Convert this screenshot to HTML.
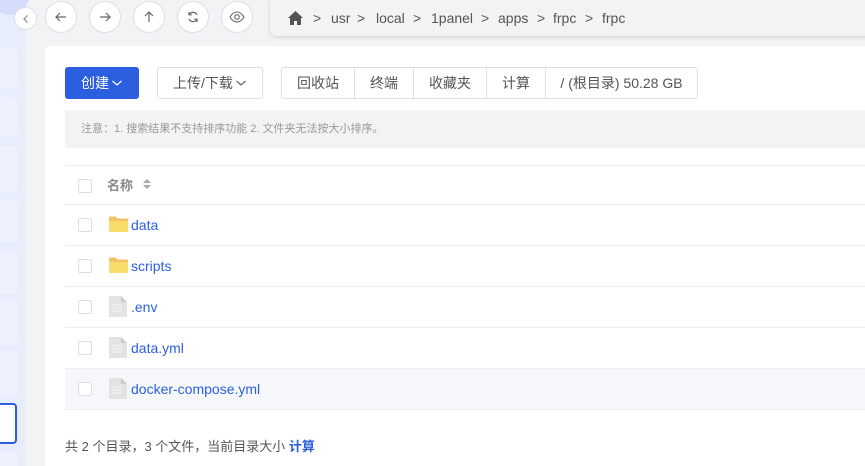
<!DOCTYPE html>
<html style="width:865px;height:466px;overflow:hidden"><head><meta charset="utf-8"><style>
*{margin:0;padding:0;box-sizing:border-box}
body{width:865px;height:466px;overflow:hidden;background:#f2f3f5;font-family:"Liberation Sans","Noto Sans CJK SC",sans-serif;position:relative;font-size:14px;color:#333}
.side{position:absolute;left:0;top:0;width:25px;height:466px;background:#e8edfc}
.side .c{position:absolute;left:-6px;width:23px;background:#eff2fe;border-radius:4px}
.side .sel{background:#fff;border:2px solid #2c5fe0}
.blob{position:absolute;left:-10px;top:-30px;width:40px;height:45px;border-radius:50%;background:#d3ddf9}
.cb{position:absolute;width:32px;height:32px;border-radius:50%;background:#fff;border:1px solid #dcdfe6;top:1px;display:flex;align-items:center;justify-content:center}
.crumb{position:absolute;left:270px;top:0;width:600px;height:36px;background:#f2f3f5;border-radius:0 0 0 6px;box-shadow:0 1px 4px rgba(0,0,0,.15);font-size:14px;color:#555}
.crumb span{position:absolute;top:10px}
.main{position:absolute;left:45px;top:46px;width:830px;height:420px;background:#fff;border-radius:4px 4px 0 0}
.btn{position:absolute;top:21px;height:32px;border:1px solid #dcdfe6;border-radius:3px;font-size:14px;display:flex;align-items:center;justify-content:center;color:#555}
.grp{position:absolute;left:236px;top:21px;height:32px;border:1px solid #dcdfe6;border-radius:3px;display:flex;font-size:14px;color:#555}
.grp div{display:flex;align-items:center;justify-content:center;border-right:1px solid #dcdfe6}
.grp div:last-child{border:none}
.note{position:absolute;left:20px;top:64px;width:820px;height:38px;background:#f2f3f5;font-size:11px;color:#999;padding:10px 0 0 16px}
.row{position:absolute;left:20px;width:820px;height:41px;border-bottom:1px solid #ebeef5}
.chk{position:absolute;left:13px;top:13px;width:14px;height:14px;border:1px solid #dcdfe6;border-radius:2px;background:#fff}
.nm{position:absolute;left:66px;top:12px;color:#2c5fe0;font-size:14px}
.ic{position:absolute;left:44px;top:11px}
</style></head><body>
<div class="side">
<div class="blob"></div>
<div class="c" style="top:48px;height:41px"></div>
<div class="c" style="top:97px;height:40px"></div>
<div class="c" style="top:146px;height:46px"></div>
<div class="c" style="top:199px;height:43px"></div>
<div class="c" style="top:251px;height:43px"></div>
<div class="c" style="top:301px;height:44px"></div>
<div class="c" style="top:350px;height:45px"></div>
<div class="c sel" style="top:403px;height:41px"></div>
<div class="c" style="top:452px;height:30px"></div>
</div>
<div class="cb" style="left:14px;top:7px;width:23px;height:23px"><svg width="10" height="10" viewBox="0 0 10 10"><path d="M6.5 1.5L3 5l3.5 3.5" stroke="#888" fill="none" stroke-width="1.2"/></svg></div>
<div class="cb" style="left:45px"><svg width="14" height="14" viewBox="0 0 14 14"><path d="M12 7H2M6 3L2 7l4 4" stroke="#666" fill="none" stroke-width="1.2"/></svg></div>
<div class="cb" style="left:89px"><svg width="14" height="14" viewBox="0 0 14 14"><path d="M2 7h10M8 3l4 4-4 4" stroke="#666" fill="none" stroke-width="1.2"/></svg></div>
<div class="cb" style="left:133px"><svg width="14" height="14" viewBox="0 0 14 14"><path d="M7 12V2M3 6l4-4 4 4" stroke="#666" fill="none" stroke-width="1.2"/></svg></div>
<div class="cb" style="left:177px"><svg width="14" height="14" viewBox="0 0 14 14"><path d="M11 5A4.3 4.3 0 0 0 3.3 4.5M3 9a4.3 4.3 0 0 0 7.7.5M3 2v2.8h2.8M11 12V9.2H8.2" stroke="#666" fill="none" stroke-width="1.2"/></svg></div>
<div class="cb" style="left:221px"><svg width="16" height="12" viewBox="0 0 16 12"><path d="M1 6C3 2.5 5.5 1 8 1s5 1.5 7 5c-2 3.5-4.5 5-7 5S3 9.5 1 6z" stroke="#666" fill="none" stroke-width="1.1"/><circle cx="8" cy="6" r="2.3" stroke="#666" fill="none" stroke-width="1.1"/></svg></div>
<div class="crumb">
<svg style="position:absolute;left:17px;top:10px" width="17" height="16" viewBox="0 0 17 16"><path d="M8.5 1L1 8h2v7h4v-4h3v4h4V8h2z" fill="#555"/></svg>
<span style="left:43px">&gt;</span><span style="left:61px">usr</span><span style="left:87px">&gt;</span><span style="left:106px">local</span><span style="left:143px">&gt;</span><span style="left:161px">1panel</span><span style="left:211px">&gt;</span><span style="left:228px">apps</span><span style="left:267px">&gt;</span><span style="left:283px">frpc</span><span style="left:315px">&gt;</span><span style="left:332px">frpc</span>
</div>
<div class="main">
<div class="btn" style="left:20px;width:74px;background:#2c5fe0;border-color:#2c5fe0;color:#fff">创建<svg width="12" height="8" viewBox="0 0 12 8" style="margin-left:2px"><path d="M1.5 2l4.5 4 4.5-4" stroke="#fff" fill="none" stroke-width="1.2"/></svg></div>
<div class="btn" style="left:112px;width:106px">上传/下载<svg width="12" height="8" viewBox="0 0 12 8" style="margin-left:2px"><path d="M1.5 2l4.5 4 4.5-4" stroke="#666" fill="none" stroke-width="1.2"/></svg></div>
<div class="grp"><div style="width:73px">回收站</div><div style="width:59px">终端</div><div style="width:73px">收藏夹</div><div style="width:59px">计算</div><div style="width:151px">/ (根目录) 50.28 GB</div></div>
<div class="note">注意：1. 搜索结果不支持排序功能 2. 文件夹无法按大小排序。</div>
<div class="row" style="top:119px;border-top:1px solid #ebeef5;height:40px"><div class="chk"></div><span style="position:absolute;left:42px;top:9px;color:#888;font-weight:bold;font-size:13px">名称</span><svg style="position:absolute;left:77px;top:12px" width="10" height="12" viewBox="0 0 10 12"><path d="M1 5l4-4 4 4zM1 7l4 4 4-4z" fill="#aaa"/></svg></div>
<div class="row" style="top:159px"><div class="chk"></div><svg class="ic" width="19" height="16" viewBox="0 0 19 16"><path d="M0 2a1.5 1.5 0 0 1 1.5-1.5h5l2 2h9A1.5 1.5 0 0 1 19 4v10.5A1.5 1.5 0 0 1 17.5 16h-16A1.5 1.5 0 0 1 0 14.5z" fill="#f9dc6b"/><path d="M0 2a1.5 1.5 0 0 1 1.5-1.5h5l2 2h9A1.5 1.5 0 0 1 19 4v1H0z" fill="#f4c265"/></svg><span class="nm">data</span></div>
<div class="row" style="top:200px"><div class="chk"></div><svg class="ic" width="19" height="16" viewBox="0 0 19 16"><path d="M0 2a1.5 1.5 0 0 1 1.5-1.5h5l2 2h9A1.5 1.5 0 0 1 19 4v10.5A1.5 1.5 0 0 1 17.5 16h-16A1.5 1.5 0 0 1 0 14.5z" fill="#f9dc6b"/><path d="M0 2a1.5 1.5 0 0 1 1.5-1.5h5l2 2h9A1.5 1.5 0 0 1 19 4v1H0z" fill="#f4c265"/></svg><span class="nm">scripts</span></div>
<div class="row" style="top:241px"><div class="chk"></div><svg class="ic" style="top:9px" width="18" height="21" viewBox="0 0 18 21"><path d="M0 0h12l6 6v15H0z" fill="#e3e3e3"/><path d="M12 0v6h6z" fill="#ccc"/><path d="M3 9h10M3 12h10M3 15h10" stroke="#f5f5f5"/></svg><span class="nm">.env</span></div>
<div class="row" style="top:282px"><div class="chk"></div><svg class="ic" style="top:9px" width="18" height="21" viewBox="0 0 18 21"><path d="M0 0h12l6 6v15H0z" fill="#e3e3e3"/><path d="M12 0v6h6z" fill="#ccc"/><path d="M3 9h10M3 12h10M3 15h10" stroke="#f5f5f5"/></svg><span class="nm">data.yml</span></div>
<div class="row" style="top:323px;background:#f5f7fa"><div class="chk"></div><svg class="ic" style="top:9px" width="18" height="21" viewBox="0 0 18 21"><path d="M0 0h12l6 6v15H0z" fill="#e3e3e3"/><path d="M12 0v6h6z" fill="#ccc"/><path d="M3 9h10M3 12h10M3 15h10" stroke="#f5f5f5"/></svg><span class="nm">docker-compose.yml</span></div>
<div style="position:absolute;left:20px;top:390px;font-size:13px;color:#555">共 2 个目录，3 个文件，当前目录大小 <b style="color:#2c5fe0">计算</b></div>
</div>
</body></html>
